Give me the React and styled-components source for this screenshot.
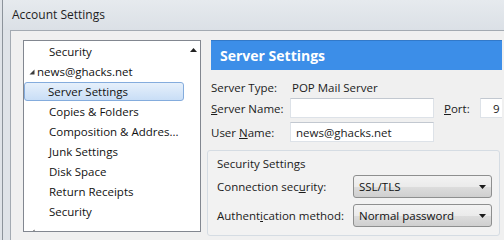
import React from 'react';
import styled, { createGlobalStyle } from 'styled-components';

const Global = createGlobalStyle`
    html, body {
        margin: 0;
        padding: 0;
        width: 504px;
        height: 240px;
        overflow: hidden;
        background: #dfe3e8;
        font-family: "Open Sans", "Noto Sans", sans-serif;
        font-size: 11.5px;
        color: #1b1b1b;
    }
`;

const items = [
    { label: 'Security', level: 1 },
    { label: 'news@ghacks.net', level: 0 },
    { label: 'Server Settings', level: 1, selected: true },
    { label: 'Copies & Folders', level: 1 },
    { label: 'Composition & Addres...', level: 1 },
    { label: 'Junk Settings', level: 1 },
    { label: 'Disk Space', level: 1 },
    { label: 'Return Receipts', level: 1 },
    { label: 'Security', level: 1 },
    { label: '', level: 0 },
];

const Expander = () => (
    <svg width="6" height="6" viewBox="0 0 6 6">
        <polygon points="5.5,0.5 5.5,5.5 0.5,5.5" fill="#3c3c3c" />
    </svg>
);

const Key = ({ children }) => <u>{children}</u>;

const App = () => {
    return (
        <Frame>
            <Global />
            <TitleBar>Account Settings</TitleBar>
            <Client>
                <Tree>
                    <TreeList>
                        {items.map((item, i) => (
                            <TreeRow key={i} $level={item.level}>
                                {item.level === 0 && <Twisty><Expander /></Twisty>}
                                <RowLabel $selected={item.selected} $top={item.level === 0}>{item.label}</RowLabel>
                            </TreeRow>
                        ))}
                    </TreeList>
                    <ScrollCol>
                        <svg width="7" height="4" viewBox="0 0 7 4">
                            <polygon points="3.5,0 7,4 0,4" fill="#222" />
                        </svg>
                    </ScrollCol>
                </Tree>
                <Pane>
                    <Header>Server Settings</Header>
                    <Form>
                        <Row>
                            <Label>Server Type:</Label>
                            <Value>POP Mail Server</Value>
                        </Row>
                        <Row $tight>
                            <Label><Key>S</Key>erver Name:</Label>
                            <TextBox $width={144} />
                            <PortLabel><Key>P</Key>ort:</PortLabel>
                            <TextBox $width={24} $pad={12}>9</TextBox>
                        </Row>
                        <Row>
                            <Label>User <Key>N</Key>ame:</Label>
                            <TextBox $width={144}>news@ghacks.net</TextBox>
                        </Row>
                    </Form>
                    <Group>
                        <GroupTitle>Security Settings</GroupTitle>
                        <SelectRow>
                            <GroupLabel>Connection sec<Key>u</Key>rity:</GroupLabel>
                            <Select>
                                SSL/TLS
                                <Arrow />
                            </Select>
                        </SelectRow>
                        <SelectRow>
                            <GroupLabel>Authent<Key>i</Key>cation method:</GroupLabel>
                            <Select>
                                Normal password
                                <Arrow />
                            </Select>
                        </SelectRow>
                    </Group>
                </Pane>
            </Client>
        </Frame>
    );
};

const Arrow = () => (
    <ArrowBox>
        <svg width="7" height="4" viewBox="0 0 7 4">
            <polygon points="0,0 7,0 3.5,4" fill="#1a1a1a" />
        </svg>
    </ArrowBox>
);

const Frame = styled.div`
    display: flex;
    flex-direction: column;
    height: 240px;
    margin-left: 2px;
    border-left: 1px solid #8c939b;
`;

const TitleBar = styled.div`
    height: 30px;
    flex: none;
    display: flex;
    align-items: center;
    padding-left: 9px;
    padding-bottom: 1px;
    box-sizing: border-box;
    background: linear-gradient(#e6eaee, #dbe0e6);
    font-size: 12px;
    color: #1e1e1e;
`;

const Client = styled.div`
    flex: 1;
    display: flex;
    margin-left: 7px;
    border-top: 1px solid #a3aab2;
    border-left: 1px solid #a3aab2;
    background: #f0f0f0;
    padding: 9px 0 0 12px;
    overflow: hidden;
`;

const Tree = styled.div`
    flex: none;
    display: flex;
    width: 178px;
    height: 192px;
    box-sizing: border-box;
    border: 1px solid #828790;
    background: #fff;
    overflow: hidden;
`;

const TreeList = styled.div`
    flex: 1;
    display: flex;
    flex-direction: column;
`;

const TreeRow = styled.div`
    flex: none;
    height: 20px;
    display: flex;
    align-items: center;
    padding-left: ${(p) => (p.$level === 0 ? 5 : 0)}px;
`;

const Twisty = styled.span`
    display: flex;
    width: 7px;
    margin-top: 1px;
`;

const RowLabel = styled.div`
    flex: 1;
    height: 19px;
    display: flex;
    align-items: center;
    box-sizing: border-box;
    padding-left: ${(p) => (p.$selected ? 23 : 0)}px;
    margin-left: ${(p) => (p.$selected || p.$top ? 0 : 24)}px;
    border: 1px solid ${(p) => (p.$selected ? '#84acdd' : 'transparent')};
    border-radius: 3px;
    background: ${(p) => (p.$selected ? 'linear-gradient(#e6f0fb, #c9def6)' : 'transparent')};
    white-space: nowrap;
    color: #111;
`;

const ScrollCol = styled.div`
    flex: none;
    width: 16px;
    display: flex;
    justify-content: center;
    padding-top: 7px;
    padding-left: 3px;
    box-sizing: border-box;
`;

const Pane = styled.div`
    flex: 1;
    min-width: 0;
    margin-left: 6px;
    margin-right: 2px;
    display: flex;
    flex-direction: column;
    overflow: hidden;
`;

const Header = styled.div`
    flex: none;
    height: 30px;
    margin-left: 4px;
    box-sizing: border-box;
    display: flex;
    align-items: center;
    padding-left: 9px;
    background: #3c8ee8;
    border-top: 1px solid #3279c9;
    color: #fff;
    font-weight: 700;
    font-size: 14px;
`;

const Form = styled.div`
    display: flex;
    flex-direction: column;
    gap: 4px;
    padding: 8px 0 0 4px;
`;

const Row = styled.div`
    display: flex;
    align-items: center;
    min-height: 18px;
    margin-top: ${(p) => (p.$tight ? -2 : 0)}px;
`;

const Label = styled.div`
    width: 79px;
    flex: none;
    white-space: nowrap;
`;

const Value = styled.div`
    padding-left: 2px;
`;

const PortLabel = styled.div`
    width: 36px;
    flex: none;
    margin-left: 10px;
`;

const TextBox = styled.div`
    flex: none;
    width: ${(p) => p.$width}px;
    height: 20px;
    box-sizing: border-box;
    display: flex;
    align-items: center;
    padding-left: ${(p) => p.$pad ?? 5}px;
    background: #fff;
    border: 1px solid #dde2e8;
    border-top-color: #c2c8d0;
    white-space: nowrap;
    overflow: hidden;
`;

const Group = styled.div`
    margin-top: 8px;
    margin-right: 2px;
    display: flex;
    flex-direction: column;
    border: 1px solid #d5dce3;
    border-radius: 3px;
    padding: 3px 7px 8px 9px;
    background: #f2f2f2;
`;

const GroupTitle = styled.div`
    height: 18px;
    display: flex;
    align-items: center;
    margin-bottom: 3px;
`;

const SelectRow = styled.div`
    display: flex;
    align-items: center;
    & + & { margin-top: 6px; }
`;

const GroupLabel = styled.div`
    width: 136px;
    flex: none;
    white-space: nowrap;
`;

const Select = styled.div`
    flex: 1;
    height: 23px;
    box-sizing: border-box;
    display: flex;
    align-items: center;
    padding-left: 5px;
    border: 1px solid #8e8f8f;
    border-radius: 3px;
    background: linear-gradient(#f3f3f3 0%, #ebebeb 50%, #dddddd 51%, #cfcfcf 100%);
    color: #111;
`;

const ArrowBox = styled.span`
    margin-left: auto;
    width: 18px;
    display: flex;
    justify-content: center;
`;

export default App;
